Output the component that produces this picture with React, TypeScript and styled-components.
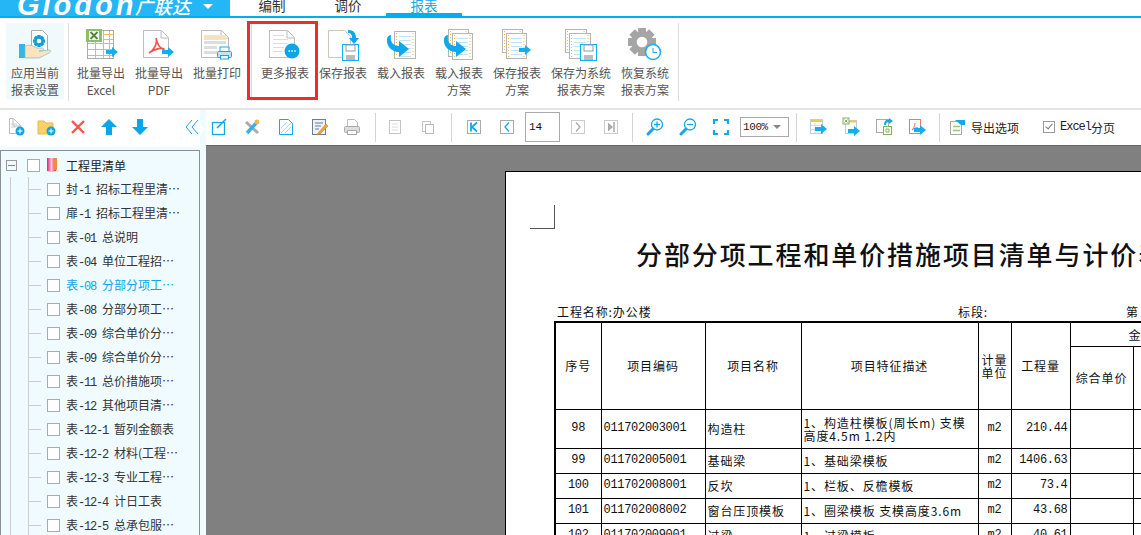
import React from 'react';
import styled, { createGlobalStyle } from 'styled-components';

const Global = createGlobalStyle`
  html, body { margin: 0; padding: 0; background: #fff; overflow: hidden; }
  body { font-family: "Noto Sans CJK SC", "Liberation Sans", sans-serif; }
  #root { width: 1141px; height: 535px; overflow: hidden; }
`;

const CJK = `"Noto Sans CJK SC", sans-serif`;
const MONO = `"Liberation Mono", "Noto Sans CJK SC", monospace`;

const Shell = styled.div`width: 1141px; height: 535px; display: flex; flex-direction: column; overflow: hidden;`;

const TopBar = styled.header`height: 16px; display: flex; border-bottom: 2px solid #00adef; flex: none;`;
const LogoBar = styled.div`
  width: 230px; height: 16px; background: #25b7f5; color: #fff; overflow: hidden; display: flex; align-items: flex-end;
  padding-left: 17px; box-sizing: border-box; position: relative; margin-right: 5px;
`;
const LogoWord = styled.span`font: italic 700 29px/28px "Liberation Sans", sans-serif; letter-spacing: 3px; width: 118px; flex: none; margin-bottom: -3px;`;
const LogoCn = styled.span`font: italic 500 18px/22px ${CJK}; margin-bottom: -1px; letter-spacing: 0.5px;`;
const Caret = styled.i`position: absolute; left: 203px; top: 4px; border: 5px solid transparent; border-top: 5px solid #fff; border-bottom: 0;`;
const Tabs = styled.nav`display: flex; height: 16px; margin-left: -1px;`;
const Tab = styled.div<{ $on?: boolean }>`
  width: 76px; height: 16px; box-sizing: border-box; text-align: center; overflow: hidden;
  font-size: 13.5px; line-height: 11px; color: ${p => (p.$on ? '#16a7e8' : '#333')};
  border-bottom: ${p => (p.$on ? '3px solid #00adef' : '0')};
`;

const Ribbon = styled.section`height: 92px; flex: none; display: flex; padding: 5px 0 0 6px; box-sizing: border-box; border-bottom: 2px solid #e4e4e4; background: #fff;`;
const RibbonBtn = styled.button<{ $w?: number; $on?: boolean; $mark?: boolean }>`
  width: ${p => p.$w ?? 58}px; height: 76px; flex: none; border: 0; padding: 3px 0 0; margin: 0;
  background: ${p => (p.$on ? '#f0f9fc' : 'transparent')}; position: relative;
  display: flex; flex-direction: column; align-items: center;
  font: 400 12px/17px ${CJK}; color: #555;
  ${p => p.$mark && `&::after { content: ''; position: absolute; left: -9px; right: -4px; top: -2px; bottom: -1px; border: 3px solid #ee2c2c; }`}
`;
const RibbonIcon = styled.svg`width: 36px; height: 36px; flex: none; margin-bottom: 2px;`;
const RibbonSep = styled.div<{ $ml?: number; $mr?: number }>`
  width: 1px; height: 78px; flex: none; background: #ddd; margin: 0 ${p => p.$mr ?? 3}px 0 ${p => p.$ml ?? 4}px;
`;

const Body = styled.div`flex: 1; display: flex; min-height: 0;`;
const LeftPane = styled.aside`width: 200px; flex: none; display: flex; flex-direction: column; background: #effbff;`;
const LeftTools = styled.div`height: 36px; flex: none; background: #fff; display: flex; align-items: center; box-sizing: border-box; padding-bottom: 2px;`;
const LeftSlot = styled.span`width: 31.2px; flex: none; display: flex; justify-content: center;`;
const Chevrons = styled.svg`width: 14px; height: 16px; margin-left: 29px; flex: none;`;
const Tree = styled.div`margin-top: 4px; flex: 1; border: 1px solid #8b8f91; border-bottom: 0; padding-top: 2px; overflow: hidden; box-sizing: border-box;`;
const RootRow = styled.div`height: 24px; display: flex; align-items: center; font-size: 12px; color: #222;`;
const Expander = styled.span`
  width: 9px; height: 9px; border: 1px solid #999; margin-left: 5px; flex: none; position: relative;
  &::after { content: ''; position: absolute; left: 1px; right: 1px; top: 4px; height: 1px; background: #18a8e0; }
`;
const Check = styled.span<{ $ml?: number }>`width: 11px; height: 11px; border: 1px solid #aaa; background: #fff; margin-left: ${p => p.$ml ?? 0}px; flex: none;`;
const BookIcon = styled.svg`width: 16px; height: 16px; margin: 0 4px 0 6px; flex: none;`;
const TreeRow = styled.div<{ $on?: boolean }>`
  height: 24px; display: flex; align-items: center; padding-left: 46px; white-space: pre;
  font-size: 12px; color: ${p => (p.$on ? '#0aa6ea' : '#333')};
  background:
    linear-gradient(#ccc, #ccc) 9px 0 / 1px 100% no-repeat,
    linear-gradient(#ccc, #ccc) 27px 0 / 1px 100% no-repeat,
    linear-gradient(#ccc, #ccc) 28px 50% / 12px 1px no-repeat;
`;
const TreeLabel = styled.span`margin-left: 6px;`;
const Ascii = styled.span`font: 12px "Liberation Mono", monospace; letter-spacing: -1.2px;`;

const Collapse = styled.div`
  width: 6px; flex: none; background: #effbff; position: relative;
  &::after { content: ''; position: absolute; left: -1px; top: 12px; border: 7px solid transparent; border-left: 6px solid #fff; border-right: 0; }
`;
const Main = styled.main`flex: 1; min-width: 0; display: flex; flex-direction: column;`;
const Toolbar = styled.div`height: 35px; flex: none; display: flex; align-items: center; background: #fff; padding-bottom: 1px; box-sizing: border-box;`;
const Slot = styled.span<{ $w?: number; $ml?: number }>`
  width: ${p => p.$w ?? 33}px; flex: none; display: flex; justify-content: center; margin-left: ${p => p.$ml ?? 0}px;
`;
const ToolSep = styled.div<{ $ml?: number; $mr?: number }>`
  width: 1px; height: 29px; background: #d4d4d4; flex: none; margin: 0 ${p => p.$mr ?? 0}px 0 ${p => p.$ml ?? 0}px;
`;
const PageInput = styled.div`
  width: 35px; height: 30px; box-sizing: border-box; border: 1px solid #aaa; margin-left: 2px; flex: none;
  font: 11px/28px "Liberation Mono", monospace; padding-left: 3px; color: #111; letter-spacing: -0.2px;
`;
const ZoomSelect = styled.div`
  width: 49px; height: 20px; box-sizing: border-box; border: 1px solid #aaa; margin-left: 3px; flex: none; display: flex; align-items: center;
  font: 11px "Liberation Mono", monospace; padding-left: 2px; color: #222; position: relative; letter-spacing: -0.4px;
  &::after { content: ''; position: absolute; right: 7px; top: 7px; border: 4px solid transparent; border-top: 4px solid #888; border-bottom: 0; }
`;
const ExportOpt = styled.div`display: flex; align-items: center; margin-left: 10px; font-size: 12px; color: #222; gap: 3px; flex: none;`;
const ExcelPage = styled.div`display: flex; align-items: center; margin-left: 24px; font-size: 12px; color: #222; flex: none;`;
const TickBox = styled.span`
  width: 10px; height: 10px; border: 1px solid #999; display: inline-flex; margin-right: 5px; position: relative;
  &::after { content: ''; position: absolute; left: 3px; top: 0; width: 3px; height: 6px; border: solid #777; border-width: 0 1px 1px 0; transform: rotate(40deg); }
`;
const ExcelAscii = styled.span`font: 12px "Liberation Mono", monospace; letter-spacing: -1px;`;

const Canvas = styled.div`flex: 1; background: #808080; border-top: 1px solid #666; overflow: hidden; padding: 25px 0 0 299px; box-sizing: border-box;`;
const Page = styled.article`
  width: 800px; height: 500px; background: #fff; border: solid #000; border-width: 1px 0 0 1px; color: #111; box-sizing: border-box;
  display: flex; flex-direction: column; padding-left: 48px;
`;
const CropMark = styled.div`width: 24px; height: 23px; margin: 33px 0 0 -24px; border: solid #555; border-width: 0 1px 1px 0; flex: none;`;
const Title = styled.h1`margin: 10px 0 0 82px; font: 500 26px/30px ${CJK}; letter-spacing: 1.9px; white-space: nowrap; color: #111; flex: none;`;
const InfoRow = styled.div`
  margin: 35px 0 0 3px; height: 16px; display: grid; grid-template-columns: 401px 168px 60px; font: 12px/16px ${CJK}; letter-spacing: 0.9px; flex: none; white-space: nowrap;
`;
const Sheet = styled.table`
  width: 680px; table-layout: fixed; border-collapse: collapse; flex: none; margin-top: 1px; border: 2px solid #000; border-right: 0;
  font: 12px/13px ${CJK}; letter-spacing: 0.9px;
`;
const Cell = styled.td<{ $align?: string; $mono?: boolean }>`
  border: 1px solid #000; padding: 0 2px; text-align: ${p => p.$align ?? 'left'};
  white-space: nowrap; overflow: hidden;
  ${p => p.$mono && `font-family: ${MONO}; letter-spacing: -0.3px;`}
`;
const HeadCell = styled.th<{ $left?: number }>`
  border: 1px solid #000; padding: 0 ${p => (p.$left ? 0 : 2)}px 0 ${p => p.$left ?? 2}px; font-weight: 400; text-align: ${p => (p.$left ? 'left' : 'center')};
  white-space: nowrap; overflow: hidden;
`;
const Row = styled.tr<{ $h: number }>`height: ${p => p.$h}px;`;

/* ---------- drawing helpers ---------- */
const Arrow = ({ x, y, c = '#12aef0' }: { x: number; y: number; c?: string }) => (
  <path d={`M${x} ${y + 3}h6v-3l6 5-6 5v-3h-6z`} fill={c} />
);
const Doc = ({ x, y, w, h, c = '#bbb' }: { x: number; y: number; w: number; h: number; c?: string }) => (
  <path d={`M${x + .5} ${y + .5}h${w - 8}l7 7v${h - 8}h-${w - 1}zM${x + w - 8} ${y + 1}v7h7`} fill="#fff" stroke={c} />
);
const Floppy = ({ x, y, s = 17 }: { x: number; y: number; s?: number }) => (
  <g>
    <rect x={x + .5} y={y + .5} width={s - 1} height={s - 1} fill="#fff" stroke="#12aef0" />
    <rect x={x + 4} y={y + 1} width={s - 8} height={6} fill="#fff" stroke="#999" />
    <rect x={x + 4} y={y + s - 6} width={s - 8} height={5} fill="#bbb" />
  </g>
);
const Ruled = ({ x, y, w, h, fill = '#fff' }: { x: number; y: number; w: number; h: number; fill?: string }) => (
  <g>
    <rect x={x + .5} y={y + .5} width={w - 1} height={h - 1} fill={fill} stroke="#b5b5b5" />
    <path d={`M${x + 2.5} ${y + 2}V${y + h - 2}M${x + w - 3} ${y + 2}V${y + h - 2}`} stroke="#f4b942" strokeDasharray="1 2" />
    {[5, 9, 13, 17, 21, 25].filter(v => v < h - 2).map(v => (
      <path key={v} d={`M${x + 5} ${y + v + .5}h${w - 10}`} stroke="#bfe3f5" />
    ))}
  </g>
);
const CurveLeft = ({ x, y }: { x: number; y: number }) => (
  <path d={`M${x} ${y}c-1 7 2 11 8 11v-5l10 8-10 8v-5c-7 0-13-6-12-13 0-2 2-4 4-4z`} fill="#0ea9ea" />
);

const Gear = ({ cx, cy, r, c }: { cx: number; cy: number; r: number; c: string }) => (
  <g>
    {[0, 45, 90, 135].map(a => (
      <rect key={a} x={cx - r * .28} y={cy - r} width={r * .56} height={r * 2} fill={c} transform={`rotate(${a} ${cx} ${cy})`} />
    ))}
    <circle cx={cx} cy={cy} r={r * .78} fill={c} />
    <circle cx={cx} cy={cy} r={r * .38} fill="#fff" />
  </g>
);

const ApplyIcon = () => (
  <RibbonIcon viewBox="0 0 36 36">
    <path d="M14.5 4.5h11l5 5v17h-16z" fill="#fff" stroke="#aaa" />
    <Gear cx={22} cy={15} r={6} c="#0e9fdc" />
    <rect x="2" y="18" width="6" height="14" fill="#35b6e8" />
    <path d="M8 20c5-2 8 0 12 2h5c2 0 2 3 0 3h-3l10-1c2 0 2 2 0 3l-10 5H8z" fill="#fde3bd" stroke="#7fb8c9" strokeWidth=".7" />
  </RibbonIcon>
);
const ExcelIcon = () => (
  <RibbonIcon viewBox="0 0 36 36">
    <rect x="4.5" y="4.5" width="26" height="28" fill="#fff" stroke="#aaa" />
    <path d="M5 17.5h25M5 23.5h25M5 29.5h25M12.5 16v16M20.5 5v27M26.5 5v27" stroke="#bbb" />
    <path d="M20 8.5h10M20 13.5h10" stroke="#f4b942" />
    <rect x="3" y="3" width="16" height="13" fill="#8cc068" />
    <rect x="6" y="5" width="10" height="9" fill="#fff" />
    <path d="M7.5 6l7 7M14.5 6l-7 7" stroke="#4d8a2f" strokeWidth="1.8" />
    <Arrow x={23} y={21} />
  </RibbonIcon>
);
const PdfIcon = () => (
  <RibbonIcon viewBox="0 0 36 36">
    <Doc x={2} y={4} w={26} h={28} />
    <path d="M15 12c2 6-3 13-7 15 3-3 13-6 15-4-3 1-7-5-8-11z" fill="none" stroke="#f0544a" strokeWidth="1.6" />
    <Arrow x={21} y={21} />
  </RibbonIcon>
);
const PrintIcon = () => (
  <RibbonIcon viewBox="0 0 36 36">
    <Doc x={2} y={4} w={28} h={28} />
    <rect x="5" y="9" width="22" height="5" fill="#f3e4bb" />
    <path d="M5 16.5h22M5 21.5h13M5 26.5h13" stroke="#ddd" strokeWidth="3" />
    <rect x="21" y="21" width="9" height="5" fill="#fff" stroke="#18a8e0" />
    <rect x="18.5" y="25.5" width="14" height="6" rx="1" fill="#bfe6f7" stroke="#18a8e0" />
    <rect x="21.5" y="29.5" width="8" height="3.5" fill="#fff" stroke="#18a8e0" />
  </RibbonIcon>
);
const MoreIcon = () => (
  <RibbonIcon viewBox="0 0 36 36">
    <Doc x={2} y={4} w={26} h={28} />
    <path d="M6 9.5h11M6 13.5h15M6 17.5h15M6 21.5h11M6 25.5h9" stroke="#ddd" />
    <circle cx="25" cy="25" r="7.5" fill="#0aa6e6" />
    <path d="M21.5 25h1.5M24.3 25h1.5M27.2 25h1.5" stroke="#fff" strokeWidth="1.6" />
  </RibbonIcon>
);
const SaveIcon = () => (
  <RibbonIcon viewBox="0 0 36 36">
    <path d="M3.5 4.5h16l6 6v21h-22z" fill="#fff" stroke="#cfc6b4" />
    <path d="M23 4c6 0 8 3 8 8h3l-5 6-5-6h3c0-3-1-5-4-5z" fill="#0ea9ea" />
    <Floppy x={17} y={18} />
  </RibbonIcon>
);
const LoadIcon = () => (
  <RibbonIcon viewBox="0 0 36 36">
    <Ruled x={11} y={5} w={22} h={28} />
    <CurveLeft x={8} y={9} />
  </RibbonIcon>
);
const LoadSetIcon = () => (
  <RibbonIcon viewBox="0 0 36 36">
    <Ruled x={7} y={3} w={21} h={28} />
    <Ruled x={11} y={7} w={21} h={27} />
    <CurveLeft x={7} y={9} />
  </RibbonIcon>
);
const SaveSetIcon = () => (
  <RibbonIcon viewBox="0 0 36 36">
    <Ruled x={3} y={3} w={21} h={24} />
    <Ruled x={7} y={7} w={21} h={26} />
    <Arrow x={20} y={19} />
  </RibbonIcon>
);
const SaveSysIcon = () => (
  <RibbonIcon viewBox="0 0 36 36">
    <Ruled x={2} y={3} w={22} h={24} />
    <Ruled x={6} y={7} w={22} h={26} />
    <Floppy x={17} y={18} />
  </RibbonIcon>
);
const RestoreIcon = () => (
  <RibbonIcon viewBox="0 0 36 36">
    <Gear cx={15} cy={16} r={14} c="#a5a5a5" />
    <circle cx="26" cy="26" r="7.5" fill="#fff" stroke="#18b0ee" strokeWidth="1.6" />
    <path d="M26 22v4.5h4" fill="none" stroke="#18a8e0" />
  </RibbonIcon>
);

const Ico = ({ children }: { children: React.ReactNode }) => (
  <svg width="20" height="20" viewBox="0 0 20 20">{children}</svg>
);
const PlusDot = ({ x = 14, y = 14 }: { x?: number; y?: number }) => (
  <g>
    <circle cx={x} cy={y} r="4.5" fill="#0aa6e6" />
    <path d={`M${x - 2.5} ${y}h5M${x} ${y - 2.5}v5`} stroke="#fff" />
  </g>
);
const Lens = ({ v }: { v?: boolean }) => (
  <g fill="none" stroke="#12a8ea">
    <circle cx="12" cy="7.5" r="5.5" strokeWidth="1.3" />
    <path d={v ? 'M9 7.5h6M12 4.5v6' : 'M9 7.5h6'} strokeWidth="1.3" />
    <path d="M8 12l-5 5" strokeWidth="3" strokeLinecap="round" />
  </g>
);

const ribbonA = [
  { icon: <ExcelIcon />, text: ['批量导出', 'Excel'] },
  { icon: <PdfIcon />, text: ['批量导出', 'PDF'] },
  { icon: <PrintIcon />, text: ['批量打印'] },
];
const ribbonB = [
  { icon: <SaveIcon />, text: ['保存报表'] },
  { icon: <LoadIcon />, text: ['载入报表'] },
  { icon: <LoadSetIcon />, text: ['载入报表', '方案'] },
  { icon: <SaveSetIcon />, text: ['保存报表', '方案'] },
  { icon: <SaveSysIcon />, text: ['保存为系统', '报表方案'], w: 70 },
  { icon: <RestoreIcon />, text: ['恢复系统', '报表方案'] },
];

const treeItems: { a: string; c: string; n: string; on?: boolean }[] = [
  { a: '封', c: '-1 ', n: '招标工程里清…' },
  { a: '扉', c: '-1 ', n: '招标工程里清…' },
  { a: '表', c: '-01 ', n: '总说明' },
  { a: '表', c: '-04 ', n: '单位工程招…' },
  { a: '表', c: '-08 ', n: '分部分项工…', on: true },
  { a: '表', c: '-08 ', n: '分部分项工…' },
  { a: '表', c: '-09 ', n: '综合单价分…' },
  { a: '表', c: '-09 ', n: '综合单价分…' },
  { a: '表', c: '-11 ', n: '总价措施项…' },
  { a: '表', c: '-12 ', n: '其他项目清…' },
  { a: '表', c: '-12-1 ', n: '暂列金额表' },
  { a: '表', c: '-12-2 ', n: '材料(工程…' },
  { a: '表', c: '-12-3 ', n: '专业工程…' },
  { a: '表', c: '-12-4 ', n: '计日工表' },
  { a: '表', c: '-12-5 ', n: '总承包服…' },
];

const rows = [
  { no: '98', code: '011702003001', name: '构造柱', desc: <>1、构造柱模板(周长m) 支模<br />高度4.5m 1.2内</>, q: '210.44', h: 39 },
  { no: '99', code: '011702005001', name: '基础梁', desc: '1、基础梁模板', q: '1406.63', h: 25 },
  { no: '100', code: '011702008001', name: '反坎', desc: '1、栏板、反檐模板', q: '73.4', h: 25 },
  { no: '101', code: '011702008002', name: '窗台压顶模板', desc: '1、圈梁模板 支模高度3.6m', q: '43.68', h: 25 },
  { no: '102', code: '011702009001', name: '过梁', desc: '1、过梁模板', q: '40.61', h: 25 },
];

export default function App() {
  return (
    <Shell>
      <Global />
      <TopBar>
        <LogoBar>
          <LogoWord>Glodon</LogoWord>
          <LogoCn>广联达</LogoCn>
          <Caret />
        </LogoBar>
        <Tabs>
          <Tab>编制</Tab>
          <Tab>调价</Tab>
          <Tab $on>报表</Tab>
        </Tabs>
      </TopBar>

      <Ribbon>
        <RibbonBtn $on><ApplyIcon />应用当前<br />报表设置</RibbonBtn>
        <RibbonSep />
        {ribbonA.map(b => (
          <RibbonBtn key={b.text.join()}>{b.icon}{b.text[0]}{b.text[1] && <><br />{b.text[1]}</>}</RibbonBtn>
        ))}
        <RibbonSep $ml={5} $mr={4} />
        <RibbonBtn $mark><MoreIcon />更多报表</RibbonBtn>
        {ribbonB.map(b => (
          <RibbonBtn key={b.text.join()} $w={b.w}>{b.icon}{b.text[0]}{b.text[1] && <><br />{b.text[1]}</>}</RibbonBtn>
        ))}
        <RibbonSep />
      </Ribbon>

      <Body>
        <LeftPane>
          <LeftTools>
            <LeftSlot><Ico><Doc x={3} y={1} w={12} h={16} /><path d="M5 7h6M5 10h5" stroke="#ccc" /><PlusDot /></Ico></LeftSlot>
            <LeftSlot><Ico><path d="M1 4h6l2 2h7v11H1z" fill="#fad067" stroke="#e9b94a" /><PlusDot /></Ico></LeftSlot>
            <LeftSlot><Ico><path d="M4 4l12 12M16 4L4 16" stroke="#f4564a" strokeWidth="2.4" /></Ico></LeftSlot>
            <LeftSlot><Ico><path d="M10 2l8 8h-5v8H7v-8H2z" fill="#0aa6ec" /></Ico></LeftSlot>
            <LeftSlot><Ico><path d="M10 18l8-8h-5V2H7v8H2z" fill="#0aa6ec" /></Ico></LeftSlot>
            <Chevrons viewBox="0 0 14 16"><path d="M7 1L1 8l6 7M13 1L7 8l6 7" fill="none" stroke="#18a8e0" /></Chevrons>
          </LeftTools>
          <Tree>
            <RootRow>
              <Expander />
              <Check $ml={10} />
              <BookIcon viewBox="0 0 16 16">
                <defs>
                  <linearGradient id="bookFill" x1="0" y1="0" x2="1" y2="0">
                    <stop offset="0" stopColor="#e0206f" />
                    <stop offset=".5" stopColor="#fbc4d8" />
                    <stop offset="1" stopColor="#e0206f" />
                  </linearGradient>
                </defs>
                <path d="M1 1h9v13l-4 1-5-1z" fill="url(#bookFill)" />
                <path d="M8 1h3v12H8z" fill="#ee8a3c" />
                <path d="M10 13l5 1-5 1z" fill="#ddd" />
              </BookIcon>
              工程里清单
            </RootRow>
            {treeItems.map((t, i) => (
              <TreeRow key={i} $on={t.on}>
                <Check />
                <TreeLabel>{t.a}<Ascii>{t.c}</Ascii>{t.n}</TreeLabel>
              </TreeRow>
            ))}
          </Tree>
        </LeftPane>
        <Collapse />
        <Main>
          <Toolbar>
            <Slot $w={34} $ml={-4}><Ico><rect x="3.5" y="5.5" width="12" height="12" fill="none" stroke="#12a8ea" strokeWidth="1.3" /><path d="M8 11l9-9" stroke="#12a8ea" strokeWidth="1.6" /></Ico></Slot>
            <Slot><Ico><path d="M3 5l12 11" stroke="#aaa" strokeWidth="3" /><path d="M15 4L4 16" stroke="#35b0e8" strokeWidth="3.4" /><circle cx="14" cy="5" r="2.4" fill="#f2b84c" /></Ico></Slot>
            <Slot><Ico><path d="M3.5 2.5h9l4 4v11h-13z" fill="#fff" stroke="#12a8ea" /><path d="M5 16l10-10M5 11l6-6M9 16l6-6" stroke="#9adcf5" /></Ico></Slot>
            <Slot><Ico><rect x="3.5" y="2.5" width="13" height="15" fill="#eef3f8" stroke="#6b7f99" /><path d="M6 6h8M6 9h6M6 12h4" stroke="#6b7f99" /><path d="M9 16l8-9 2 2-8 8-3 1z" fill="#f2a43a" stroke="#c9701a" strokeWidth=".5" /></Ico></Slot>
            <Slot><Ico><path d="M5.5 2.5h7l3 3v4h-10z" fill="#fff" stroke="#bbb" /><rect x="2.5" y="9.5" width="15" height="6" rx="1" fill="#ddd" stroke="#aaa" /><rect x="5.5" y="13.5" width="9" height="4" fill="#fff" stroke="#aaa" /></Ico></Slot>
            <ToolSep $ml={7} $mr={2} />
            <Slot><Ico><rect x="4.5" y="3.5" width="11" height="13" fill="none" stroke="#c4c4c4" /><path d="M7 7h6M7 10h6M7 13h6" stroke="#ddd" /></Ico></Slot>
            <Slot><Ico><rect x="4.5" y="4.5" width="8" height="10" fill="none" stroke="#c4c4c4" /><rect x="7.5" y="7.5" width="8" height="9" fill="#fff" stroke="#bbb" /></Ico></Slot>
            <ToolSep $ml={7} $mr={5} />
            <Slot><Ico><rect x="3.5" y="3.5" width="13" height="13" fill="none" stroke="#aaa" /><path d="M7 5.5v9M13 5.5L8 10l5 4.5" fill="none" stroke="#12a8ea" strokeWidth="1.8" /></Ico></Slot>
            <Slot><Ico><rect x="3.5" y="3.5" width="13" height="13" fill="none" stroke="#aaa" /><path d="M12 5.5L8 10l4 4.5" fill="none" stroke="#12a8ea" strokeWidth="1.3" /></Ico></Slot>
            <PageInput>14</PageInput>
            <Slot $ml={1}><Ico><rect x="3.5" y="3.5" width="13" height="13" fill="none" stroke="#ccc" /><path d="M8 5.5l4 4.5-4 4.5" fill="none" stroke="#aaa" strokeWidth="1.3" /></Ico></Slot>
            <Slot><Ico><rect x="3.5" y="3.5" width="13" height="13" fill="none" stroke="#ccc" /><path d="M7 5.5l5 4.5-5 4.5z" fill="#aaa" /><path d="M13 5v10" stroke="#aaa" strokeWidth="1.5" /></Ico></Slot>
            <ToolSep $ml={5} $mr={5} />
            <Slot><Ico><Lens v /></Ico></Slot>
            <Slot><Ico><Lens /></Ico></Slot>
            <Slot><Ico><path d="M3 7V3h4M13 3h4v4M17 13v4h-4M7 17H3v-4" fill="none" stroke="#12a8ea" strokeWidth="2.2" /></Ico></Slot>
            <ZoomSelect>100%</ZoomSelect>
            <ToolSep $ml={7} $mr={4} />
            <Slot><Ico><rect x="2.5" y="2.5" width="12" height="14" fill="#fff" stroke="#bcd" /><path d="M3 4h11" stroke="#f4c64a" strokeWidth="2" /><path d="M3 8.5h11M3 12.5h11M7 6v10" stroke="#cde" /><Arrow x={7} y={7} /></Ico></Slot>
            <Slot><Ico><rect x="4.5" y="3.5" width="11" height="13" fill="#fff" stroke="#bcd" /><path d="M8 4.5h7" stroke="#f4c64a" strokeWidth="2" /><rect x="2" y="1" width="6" height="6" fill="#fff" stroke="#7cb45a" /><path d="M3.5 2.5l3 3M6.5 2.5l-3 3" stroke="#7cb45a" /><Arrow x={7} y={9} /></Ico></Slot>
            <Slot><Ico><rect x="2.5" y="2.5" width="12" height="13" fill="#fff" stroke="#aaa" /><rect x="9.5" y="9.5" width="8" height="8" fill="#fff" stroke="#7cb45a" /><path d="M12 12h3v3h-3z" fill="none" stroke="#7cb45a" /><path d="M10 8c0-4 2-6 5-5V1l4 3-4 3V5c-2 0-3 1-3 3z" fill="#12a8ea" /></Ico></Slot>
            <Slot><Ico><rect x="2.5" y="2.5" width="11" height="14" fill="#fff" stroke="#f0766a" /><path d="M8 6c0 3-2 6-3 7 2-2 5-3 6-2" fill="none" stroke="#f0766a" /><Arrow x={7} y={8} /></Ico></Slot>
            <ToolSep $ml={6} />
            <ExportOpt>
              <svg width="18" height="16" viewBox="0 0 18 16"><rect x=".5" y="2.5" width="11" height="13" fill="#fff" stroke="#aaa" /><path d="M3 7.5h7M3 11.5h7" stroke="#9cc47f" strokeWidth="1.5" /><path d="M5 1h10v5H11z" fill="#12a8ea" /></svg>
              导出选项
            </ExportOpt>
            <ExcelPage><TickBox /><ExcelAscii>Excel</ExcelAscii>分页</ExcelPage>
          </Toolbar>
          <Canvas>
            <Page>
              <CropMark />
              <Title>分部分项工程和单价措施项目清单与计价表</Title>
              <InfoRow><span>工程名称:办公楼</span><span>标段:</span><span>第 14 页</span></InfoRow>
              <Sheet>
                <colgroup>
                  <col style={{ width: 46 }} /><col style={{ width: 104 }} /><col style={{ width: 96 }} /><col style={{ width: 177 }} />
                  <col style={{ width: 33 }} /><col style={{ width: 59 }} /><col style={{ width: 63 }} /><col style={{ width: 102 }} />
                </colgroup>
                <tbody>
                  <Row $h={24}>
                    <HeadCell rowSpan={2}>序号</HeadCell>
                    <HeadCell rowSpan={2}>项目编码</HeadCell>
                    <HeadCell rowSpan={2}>项目名称</HeadCell>
                    <HeadCell rowSpan={2}>项目特征描述</HeadCell>
                    <HeadCell rowSpan={2}>计量<br />单位</HeadCell>
                    <HeadCell rowSpan={2}>工程量</HeadCell>
                    <HeadCell colSpan={2} $left={58}>金额(元)</HeadCell>
                  </Row>
                  <Row $h={63}>
                    <HeadCell>综合单价</HeadCell>
                    <HeadCell>综合合价</HeadCell>
                  </Row>
                  {rows.map(r => (
                    <Row key={r.no} $h={r.h}>
                      <Cell $mono $align="center">{r.no}</Cell>
                      <Cell $mono>{r.code}</Cell>
                      <Cell>{r.name}</Cell>
                      <Cell>{r.desc}</Cell>
                      <Cell $mono $align="center">m2</Cell>
                      <Cell $mono $align="right">{r.q}</Cell>
                      <Cell />
                      <Cell />
                    </Row>
                  ))}
                </tbody>
              </Sheet>
            </Page>
          </Canvas>
        </Main>
      </Body>
    </Shell>
  );
}
